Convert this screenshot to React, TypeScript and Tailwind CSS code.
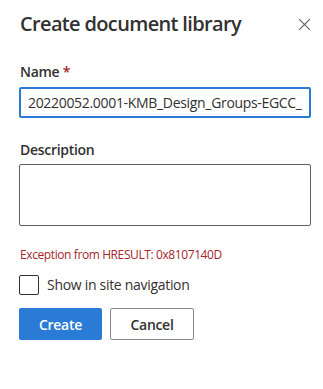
import React, { useState } from 'react'

const font = { fontFamily: '"Open Sans", "Noto Sans", "Liberation Sans", sans-serif' }

export default function App() {
  const [name, setName] = useState('20220052.0001-KMB_Design_Groups-EGCC_Internal')
  const [desc, setDesc] = useState('')
  const [showInNav, setShowInNav] = useState(false)

  return (
    <div className="w-[323px] h-[389px] bg-white text-[#323130] pl-[19px] pr-[12px] tracking-[-0.3px]" style={font}>
      {/* header */}
      <div className="flex items-start justify-between pt-[10px]">
        <h1 className="text-[20px] leading-[28px] font-semibold tracking-[-0.65px] pl-px">Create document library</h1>
        <button className="mt-[7px] w-[14px] h-[14px] flex items-center justify-center text-[#605e5c]">
          <svg width="13" height="13" viewBox="0 0 12 12" fill="none" stroke="currentColor" strokeWidth="1">
            <path d="M1 1 L11 11 M11 1 L1 11" />
          </svg>
        </button>
      </div>

      {/* name */}
      <label className="block mt-[24px] text-[14px] leading-[20px] font-semibold pl-px">
        Name <span className="text-[#a4262c]">*</span>
      </label>
      <input
        value={name}
        onChange={e => setName(e.target.value)}
        className="mt-[5px] block w-[292px] h-[31px] border-2 border-[#2a7bd5] rounded-[2px] px-[7px] text-[14px] tracking-[-0.32px] outline-none text-[#323130]"
        style={font}
      />

      {/* description */}
      <label className="block mt-[22px] text-[14px] leading-[20px] font-semibold pl-px">Description</label>
      <textarea
        value={desc}
        onChange={e => setDesc(e.target.value)}
        className="mt-[4px] block w-[292px] h-[62px] border border-[#605e5c] rounded-[2px] px-2 py-1 text-[14px] outline-none resize-none"
        style={font}
      />

      <p className="mt-[21px] text-[12px] leading-[16px] text-[#a4262c] pl-px tracking-[-0.4px]">Exception from HRESULT: 0x8107140D</p>

      {/* checkbox */}
      <label className="mt-[12px] flex items-center gap-[8px] cursor-pointer">
        <span
          onClick={() => setShowInNav(v => !v)}
          className="w-[20px] h-[20px] border border-[#323130] rounded-[2px] flex items-center justify-center"
        >
          {showInNav && (
            <svg width="12" height="12" viewBox="0 0 12 12" fill="none" stroke="#323130" strokeWidth="1.2">
              <path d="M2 6.5 L5 9 L10 3" />
            </svg>
          )}
        </span>
        <span className="text-[14px] leading-[20px] text-[#323130]">Show in site navigation</span>
      </label>

      {/* actions */}
      <div className="mt-[13px] flex gap-[8px]">
        <button className="w-[83px] h-[32px] bg-[#2a7bd5] rounded-[2px] text-white text-[14px] font-semibold">Create</button>
        <button className="w-[84px] h-[32px] border border-[#8a8886] rounded-[2px] text-[#323130] text-[14px] font-semibold bg-white">Cancel</button>
      </div>
    </div>
  )
}
